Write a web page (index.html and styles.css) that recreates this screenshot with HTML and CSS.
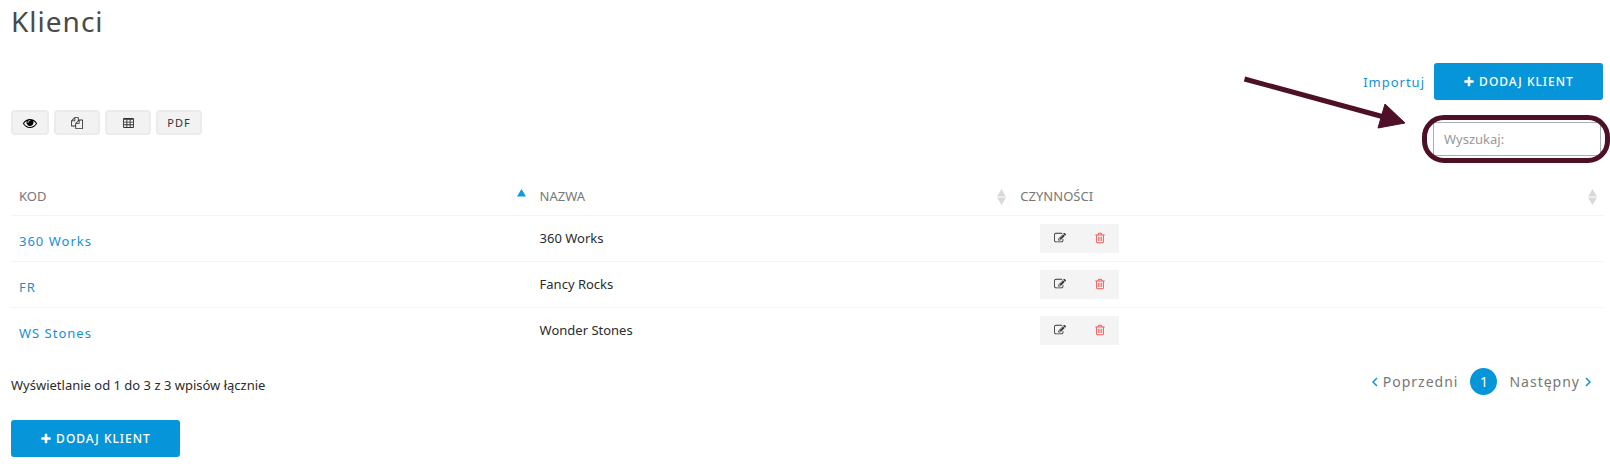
FILE: index.html
```
<!DOCTYPE html>
<html lang="pl">
<head>
<meta charset="utf-8">
<meta name="viewport" content="width=device-width, initial-scale=1">
<title>Klienci</title>
<link rel="stylesheet" href="styles.css">
</head>
<body>
<svg class="sprite" aria-hidden="true">
  <symbol id="plus" viewBox="0 0 1792 1792"><path d="M1600 736v192q0 40-28 68t-68 28h-416v416q0 40-28 68t-68 28h-192q-40 0-68-28t-28-68v-416h-416q-40 0-68-28t-28-68v-192q0-40 28-68t68-28h416v-416q0-40 28-68t68-28h192q40 0 68 28t28 68v416h416q40 0 68 28t28 68z"/></symbol>
  <symbol id="eye" viewBox="0 0 1792 1792"><path d="M1664 960q-152-236-381-353 61 104 61 225 0 185-131.500 316.500t-316.500 131.500-316.500-131.500-131.500-316.500q0-121 61-225-229 117-381 353 133 205 333.500 326.500t434.500 121.500 434.500-121.500 333.500-326.500zm-720-384q0-20-14-34t-34-14q-125 0-214.500 89.500t-89.500 214.500q0 20 14 34t34 14 34-14 14-34q0-86 61-147t147-61q20 0 34-14t14-34zm848 384q0 34-20 69-140 230-376.500 368.500t-499.500 138.500-499.500-139-376.500-368q-20-35-20-69t20-69q140-229 376.500-368t499.500-139 499.500 139 376.500 368q20 35 20 69z"/></symbol>
  <symbol id="copy" viewBox="0 0 1792 1792"><path d="M1696 384q40 0 68 28t28 68v1216q0 40-28 68t-68 28h-960q-40 0-68-28t-28-68v-288h-544q-40 0-68-28t-28-68v-672q0-40 20-88t48-76l408-408q28-28 76-48t88-20h416q40 0 68 28t28 68v328q68-40 128-40h416zm-544 213l-299 299h299v-299zm-640-384l-299 299h299v-299zm196 647l316-316v-416h-384v416q0 40-28 68t-68 28h-416v640h512v-256q0-40 20-88t48-76zm956 804v-1152h-384v416q0 40-28 68t-68 28h-416v640h896z"/></symbol>
  <symbol id="grid" viewBox="0 0 12 11"><path fill-rule="evenodd" d="M1 0h10q1 0 1 1v9q0 1-1 1H1q-1 0-1-1V1q0-1 1-1zM1 2v2h2.700V2zM4.700 2v2h2.600V2zM8.300 2v2H11V2zM1 5v2h2.700V5zM4.700 5v2h2.600V5zM8.300 5v2H11V5zM1 8v2h2.700V8zM4.700 8v2h2.600V8zM8.300 8v2H11V8z"/></symbol>
  <symbol id="edit" viewBox="0 0 1792 1792"><path d="M888 1184l116-116-152-152-116 116v56h96v96h56zm440-720q-16-16-33 1l-350 350q-17 17-1 33t33-1l350-350q17-17 1-33zm80 594v190q0 119-84.500 203.500t-203.500 84.500h-832q-119 0-203.500-84.500t-84.500-203.500v-832q0-119 84.500-203.500t203.500-84.500h832q63 0 117 25 15 7 18 23 3 17-9 29l-49 49q-14 14-32 8-23-6-45-6h-832q-66 0-113 47t-47 113v832q0 66 47 113t113 47h832q66 0 113-47t47-113v-126q0-13 9-22l64-64q15-15 35-7t20 29zm-96-738l288 288-672 672h-288v-288zm444 132l-92 92-288-288 92-92q28-28 68-28t68 28l152 152q28 28 28 68t-28 68z"/></symbol>
  <symbol id="trash" viewBox="0 0 1792 1792"><path d="M704 736v576q0 14-9 23t-23 9h-64q-14 0-23-9t-9-23v-576q0-14 9-23t23-9h64q14 0 23 9t9 23zm256 0v576q0 14-9 23t-23 9h-64q-14 0-23-9t-9-23v-576q0-14 9-23t23-9h64q14 0 23 9t9 23zm256 0v576q0 14-9 23t-23 9h-64q-14 0-23-9t-9-23v-576q0-14 9-23t23-9h64q14 0 23 9t9 23zm128 724v-948h-896v948q0 22 7 40.500t14.500 27 10.500 8.500h832q3 0 10.500-8.500t14.500-27 7-40.500zm-672-1076h448l-48-117q-7-9-17-11h-317q-10 2-17 11zm928 32v64q0 14-9 23t-23 9h-96v948q0 83-47 143.500t-113 60.500h-832q-66 0-113-58.500t-47-141.500v-952h-96q-14 0-23-9t-9-23v-64q0-14 9-23t23-9h309l70-167q15-37 54-63t79-26h320q40 0 79 26t54 63l70 167h309q14 0 23 9t9 23z"/></symbol>
  <symbol id="sort" viewBox="0 0 9 16"><path d="M4.500 0L9 7.500H0zM0 8.500h9l-4.500 7.500z"/></symbol>
  <symbol id="sort-up" viewBox="0 0 9 16"><path d="M4.500 0L9 7.500H0z"/></symbol>
</svg>
<main class="page">
  <h1 class="title">Klienci</h1>
  <div class="actions">
    <a class="link" href="#import">Importuj</a>
    <button class="primary" type="button"><svg class="icon" aria-hidden="true"><use href="#plus"/></svg>DODAJ KLIENT</button>
  </div>
  <div class="tools">
    <div class="exports">
      <button class="tool tool-narrow" type="button" aria-label="Widoczność kolumn"><svg class="icon icon-eye" aria-hidden="true"><use href="#eye"/></svg></button>
      <button class="tool" type="button" aria-label="Kopiuj"><svg class="icon" aria-hidden="true"><use href="#copy"/></svg></button>
      <button class="tool" type="button" aria-label="Arkusz"><svg class="icon icon-grid" aria-hidden="true"><use href="#grid"/></svg></button>
      <button class="tool" type="button">PDF</button>
    </div>
    <div class="search">
      <input class="search-input" type="search" placeholder="Wyszukaj:" aria-label="Wyszukaj">
      <span class="ring"></span>
      <svg class="pointer" viewBox="0 0 164 56" aria-hidden="true"><path d="M1.500 3L141 41" stroke-width="5"/><path class="pointer-head" d="M142 28l20 19-27 5z"/></svg>
    </div>
  </div>
  <table class="clients">
    <colgroup><col class="col-code"><col class="col-name"><col class="col-actions"></colgroup>
    <thead>
      <tr>
        <th aria-sort="ascending"><button class="sorter sorted" type="button">KOD<svg class="sort-icon" aria-hidden="true"><use href="#sort-up"/></svg></button></th>
        <th><button class="sorter" type="button">NAZWA<svg class="sort-icon" aria-hidden="true"><use href="#sort"/></svg></button></th>
        <th><button class="sorter" type="button">CZYNNOŚCI<svg class="sort-icon" aria-hidden="true"><use href="#sort"/></svg></button></th>
      </tr>
    </thead>
    <tbody>
      <tr>
        <td class="code"><a class="link" href="#360-works">360 Works</a></td>
        <td>360 Works</td>
        <td><div class="row-actions"><button type="button" class="row-button" aria-label="Edytuj"><svg class="icon" aria-hidden="true"><use href="#edit"/></svg></button><button type="button" class="row-button danger" aria-label="Usuń"><svg class="icon" aria-hidden="true"><use href="#trash"/></svg></button></div></td>
      </tr>
      <tr>
        <td class="code"><a class="link" href="#fr">FR</a></td>
        <td>Fancy Rocks</td>
        <td><div class="row-actions"><button type="button" class="row-button" aria-label="Edytuj"><svg class="icon" aria-hidden="true"><use href="#edit"/></svg></button><button type="button" class="row-button danger" aria-label="Usuń"><svg class="icon" aria-hidden="true"><use href="#trash"/></svg></button></div></td>
      </tr>
      <tr>
        <td class="code"><a class="link" href="#ws-stones">WS Stones</a></td>
        <td>Wonder Stones</td>
        <td><div class="row-actions"><button type="button" class="row-button" aria-label="Edytuj"><svg class="icon" aria-hidden="true"><use href="#edit"/></svg></button><button type="button" class="row-button danger" aria-label="Usuń"><svg class="icon" aria-hidden="true"><use href="#trash"/></svg></button></div></td>
      </tr>
    </tbody>
  </table>
  <div class="footer">
    <p class="summary">Wyświetlanie od 1 do 3 z 3 wpisów łącznie</p>
    <nav class="pager" aria-label="Strony">
      <a class="page-link" href="#prev"><svg class="chevron" viewBox="0 0 6 10" aria-hidden="true"><path d="M5 1L1 5l4 4"/></svg>Poprzedni</a>
      <a class="page-current" href="#1" aria-current="page">1</a>
      <a class="page-link" href="#next">Następny<svg class="chevron" viewBox="0 0 6 10" aria-hidden="true"><path d="M1 1l4 4-4 4"/></svg></a>
    </nav>
  </div>
  <button class="primary" type="button"><svg class="icon" aria-hidden="true"><use href="#plus"/></svg>DODAJ KLIENT</button>
</main>
</body>
</html>
```

FILE: styles.css
```
* { box-sizing: border-box; }
body {
  margin: 0;
  background: #fff;
  color: #2b2b2b;
  font: 13px/20px "Noto Sans", "Open Sans", sans-serif;
}
button, input { font: inherit; }
button { cursor: pointer; }
a { text-decoration: none; }
.sprite { position: absolute; width: 0; height: 0; }
.page { padding: 3px 7px 16px 11px; }
.title {
  margin: 0;
  color: #4a4a4a;
  font-size: 28px;
  font-weight: 400;
  line-height: 36px;
  letter-spacing: 1px;
}
.icon { width: 12px; height: 12px; fill: currentColor; }
.link { color: #1490d8; letter-spacing: 1px; }

.actions {
  display: flex;
  justify-content: flex-end;
  align-items: center;
  gap: 9px;
  margin-top: 24px;
}
.primary {
  display: flex;
  align-items: center;
  justify-content: center;
  gap: 4px;
  min-width: 169px;
  height: 37px;
  padding: 0 16px;
  border: 0;
  border-radius: 3px;
  background: #0795d9;
  color: #fff;
  font-size: 12px;
  font-weight: 500;
  letter-spacing: 1px;
}

.tools {
  display: flex;
  justify-content: space-between;
  align-items: flex-start;
  padding-top: 10px;
}
.exports { display: flex; gap: 5px; }
.tool {
  display: flex;
  align-items: center;
  justify-content: center;
  width: 46px;
  height: 25px;
  padding: 0;
  border: 2px solid #ebebeb;
  border-radius: 4px;
  background: #f2f2f2;
  color: #333;
  font-size: 11px;
  letter-spacing: 1px;
}
.tool-narrow { width: 38px; color: #000; }
.icon-eye { width: 14px; height: 14px; }
.icon-grid { width: 11px; height: 10px; }
.search { position: relative; margin: 12px 2px 0 0; }
.search-input {
  display: block;
  width: 168px;
  height: 34px;
  padding: 0 10px;
  border: 1px solid #a9adb5;
  border-radius: 2px;
  outline: 0;
  background: #fff;
  color: #2b2b2b;
}
.search-input::placeholder { color: #999; opacity: 1; }
.ring {
  position: absolute;
  inset: -7px -9px -7px -11px;
  border: 5px solid #4d1026;
  border-radius: 22px;
  pointer-events: none;
}
.pointer {
  position: absolute;
  right: 194px;
  bottom: 24px;
  width: 164px;
  height: 56px;
  stroke: #4d1026;
}
.pointer-head { fill: #4d1026; }

.clients {
  width: 100%;
  margin-top: 21px;
  border-collapse: collapse;
  table-layout: fixed;
}
.col-code { width: 32.7%; }
.col-name { width: 30.2%; }
.clients th { height: 38px; padding: 0; font-weight: 400; }
.clients td { height: 46px; padding: 0 8px; }
.clients tbody tr { border-top: 1px solid #f4f4f4; }
.clients .code { padding-top: 5px; }
.sorter {
  display: flex;
  align-items: center;
  justify-content: space-between;
  width: 100%;
  padding: 0 6px 0 8px;
  border: 0;
  background: none;
  color: #777;
  text-align: left;
}
.sort-icon { width: 9px; height: 16px; margin-top: 2px; fill: #d9d9d9; }
.sorted .sort-icon { fill: #0f9ade; }
.row-actions {
  display: flex;
  width: 79px;
  margin-left: 20px;
  background: #f4f4f4;
}
.row-button {
  display: flex;
  flex: 1;
  align-items: center;
  justify-content: center;
  height: 29px;
  padding: 0;
  border: 0;
  background: none;
  color: #333;
}
.danger { color: #ee5555; }

.footer {
  display: flex;
  justify-content: space-between;
  align-items: flex-start;
  margin: 15px 0 25px;
}
.summary { margin: 7px 0 0; }
.pager {
  display: flex;
  align-items: center;
  gap: 12px;
  padding-right: 12px;
  font-size: 14px;
}
.page-link {
  display: flex;
  align-items: center;
  gap: 5px;
  color: #777;
  letter-spacing: 1px;
}
.page-current {
  width: 27px;
  border-radius: 50%;
  background: #0795d9;
  color: #fff;
  line-height: 27px;
  text-align: center;
}
.chevron { width: 6px; height: 10px; fill: none; stroke: #1490d8; stroke-width: 1.5; }
```
